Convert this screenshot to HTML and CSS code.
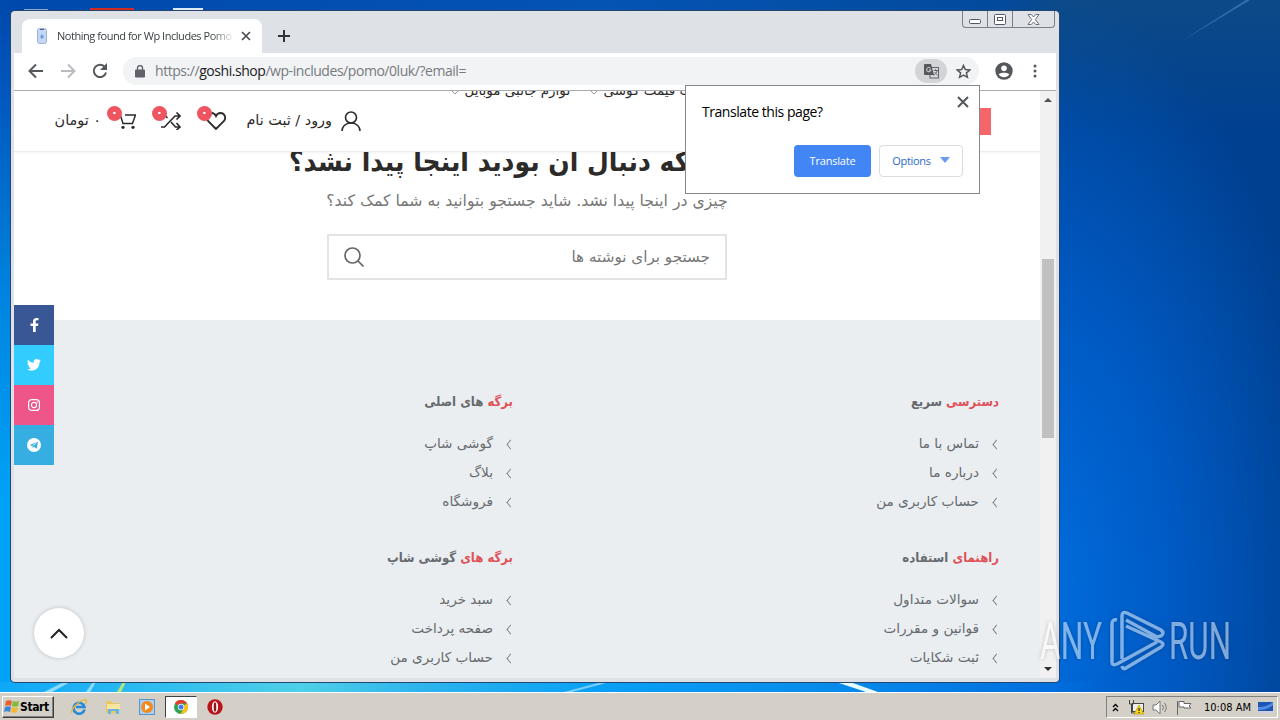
FILE: index.html
```html
<!DOCTYPE html>
<html lang="en">
<head>
    <meta charset="UTF-8">
    <title>Desktop</title>
    <link rel="stylesheet" href="styles.css">
</head>
<body>
<div class="desktop">
    <svg class="wallpaper" width="1280" height="692" viewBox="0 0 1280 692">
        <path d="M44 692L64 682H70L52 692zM86 692L93 682H96L90 692z" fill="#8fdcff"/>
        <path d="M117 692L123 682H126L121 692z" fill="#b4e87a"/>
        <path d="M564 692L602 682H610L572 692z" fill="#7ccfff"/>
        <path d="M836 682h14l28 10h-12z" fill="#e8fbff"/>
        <path d="M1180 42L1250 0h-4z" fill="#4c8acb" opacity=".6"/>
        <path d="M24 9h24v2H24z" fill="#8fa6cf"/>
        <path d="M90 8h44v3H90z" fill="#d32a22"/>
        <path d="M173 8h30v3h-30z" fill="#dfe8f5"/>
    </svg>

    <div class="window">
        <div class="tabstrip">
            <div class="tab">
                <svg width="12" height="16" viewBox="0 0 12 16"><rect x="1.5" y=".5" width="9" height="15" rx="2" fill="#c3d7f5" stroke="#a3b2d3"/><path d="M4 1h4v1H4z" fill="#51649a"/><path d="M4 9l2-3 2 3-2 2z" fill="#6f9be0"/></svg>
                <span class="tab-title">Nothing found for Wp Includes Pomo</span>
                <svg width="10" height="10" viewBox="0 0 10 10" stroke="#4a4d51" stroke-width="1.7"><path d="M1 1l8 8M9 1L1 9"/></svg>
            </div>
            <svg class="new-tab" width="12" height="12" viewBox="0 0 12 12" stroke="#303438" stroke-width="2"><path d="M6 0v12M0 6h12"/></svg>
            <div class="win-buttons">
                <span class="minimize"><svg width="12" height="5" viewBox="0 0 12 5"><rect x=".5" y=".5" width="11" height="4" rx="1" fill="#fff" stroke="#535666"/></svg></span>
                <span><svg width="12" height="11" viewBox="0 0 12 11" fill="#fff" stroke="#535666"><rect x=".5" y=".5" width="11" height="10" rx="1"/><rect x="3.5" y="3.5" width="5" height="3"/></svg></span>
                <span class="wide"><svg width="13" height="11" viewBox="0 0 13 11" fill="#fff" stroke="#6c6f7c"><path d="M1 .5h3.2L6.500 3 8.800.5H12L8.300 5.500 12 10.500H8.800L6.500 8l-2.300 2.500H1l3.700-5z"/></svg></span>
            </div>
        </div>

        <div class="toolbar">
            <svg width="16" height="16" viewBox="0 0 16 16" fill="none" stroke="#54575b" stroke-width="2"><path d="M15 8H2M8 1.500L1.500 8 8 14.500"/></svg>
            <svg width="16" height="16" viewBox="0 0 16 16" fill="none" stroke="#b9bbbe" stroke-width="2"><path d="M1 8h13M8 1.500L14.500 8 8 14.500"/></svg>
            <svg width="16" height="16" viewBox="0 0 16 16" fill="none" stroke="#54575b" stroke-width="2"><path d="M13 4.200A6.200 6.200 0 1 0 14 9.500"/><path d="M15 0v7H8z" fill="#54575b" stroke="none"/></svg>
            <div class="omnibox">
                <svg width="10" height="13" viewBox="0 0 10 13"><rect y="4.500" width="10" height="8" rx="1" fill="#5f6368"/><path d="M2.500 5V3a2.500 2.500 0 0 1 5 0v2" fill="none" stroke="#5f6368" stroke-width="1.400"/></svg>
                <span class="url">https://<b>goshi.shop</b>/wp-includes/pomo/0luk/?email=</span>
                <span class="translate-icon"><svg width="15" height="15" viewBox="0 0 15 15"><rect x="6" y="3.500" width="8.500" height="10.500" fill="#d8dadc" stroke="#5f6368"/><path d="M1 0h6l3 11H1a1 1 0 0 1-1-1V1a1 1 0 0 1 1-1z" fill="#54575b"/><path d="M6.500 4.200A2.200 2.200 0 1 0 7 6H5" fill="none" stroke="#e4e5e7"/><path d="M9.500 6.500H14M11.700 5v1.500M13 6.500c0 2-2 4-3.500 5M10.500 8l3 3.500" fill="none" stroke="#5f6368" stroke-width=".9"/></svg></span>
                <svg width="15" height="15" viewBox="0 0 15 15" fill="none" stroke="#54575b" stroke-width="1.500"><path d="M7.500 1.500l1.800 4.100 4.500.4-3.400 2.900 1 4.400-3.900-2.300-3.900 2.300 1-4.400L1.200 6l4.500-.4z"/></svg>
            </div>
            <svg width="18" height="18" viewBox="0 0 18 18"><circle cx="9" cy="9" r="8.700" fill="#54575b"/><circle cx="9" cy="6.300" r="2.800" fill="#fff"/><path d="M3.600 12.600c1.200-2.600 9.600-2.600 10.800 0-2.400 3.400-8.400 3.400-10.800 0z" fill="#fff"/></svg>
            <svg class="menu" width="4" height="14" viewBox="0 0 4 14" fill="#54575b"><circle cx="2" cy="2" r="1.500"/><circle cx="2" cy="7" r="1.500"/><circle cx="2" cy="12" r="1.500"/></svg>
        </div>

        <div class="viewport">
            <div class="page" dir="rtl" lang="fa">
                <div class="site-header">
                    <div class="nav">
                        <span>لیست قیمت گوشی</span>
                        <svg width="6" height="4" viewBox="0 0 6 4" fill="none" stroke="#999"><path d="M0 0l3 3 3-3"/></svg>
                        <span class="nav-second">لوازم جانبی موبایل</span>
                        <svg width="6" height="4" viewBox="0 0 6 4" fill="none" stroke="#999"><path d="M0 0l3 3 3-3"/></svg>
                    </div>
                    <div class="header-tools">
                        <span class="badge-sale"></span>
                        <svg width="20" height="20" viewBox="0 0 20 20" fill="none" stroke="#2d2a2a" stroke-width="1.600"><circle cx="10" cy="6.500" r="5.500"/><path d="M1 20c0-4 3-8 9-8s9 4 9 8"/></svg>
                        <span class="login">ورود / ثبت نام</span>
                        <span class="tool tool-heart"><svg width="20" height="18" viewBox="0 0 20 18" fill="none" stroke="#2d2a2a" stroke-width="1.800"><path d="M10 17L2 9C-.8 5 2 1 5.500 1 8 1 9.300 2.500 10 4c.7-1.500 2-3 4.500-3C18 1 20.800 5 18 9z"/></svg><i>۰</i></span>
                        <span class="tool tool-compare"><svg width="20" height="18" viewBox="0 0 20 18" fill="none" stroke="#2d2a2a" stroke-width="1.600"><path d="M0 15h3.500L14 4h5M0 3h3.500l3 3M10 10l4.500 5H19M15.500.5L19 4l-3.500 3.500M15.500 11l3.500 4-3.500 3"/></svg><i>۰</i></span>
                        <span class="tool tool-cart"><svg width="19" height="17" viewBox="0 0 19 17" fill="none" stroke="#2d2a2a" stroke-width="1.500"><path d="M0 2h3l3 9.500h9.500L18.500 3H8"/><circle cx="6" cy="15.300" r="1.600" fill="#2d2a2a" stroke="none"/><circle cx="16" cy="15.300" r="1.600" fill="#2d2a2a" stroke="none"/></svg><i>۰</i></span>
                        <span class="total">۰ تومان</span>
                    </div>
                </div>

                <div class="not-found">
                    <h1>چیزی که دنبال آن بودید اینجا پیدا نشد؟</h1>
                    <p>چیزی در اینجا پیدا نشد. شاید جستجو بتوانید به شما کمک کند؟</p>
                    <div class="search">
                        <span>جستجو برای نوشته ها</span>
                        <svg width="20" height="20" viewBox="0 0 20 20" fill="none" stroke="#666" stroke-width="1.700"><circle cx="8.500" cy="8.500" r="7.500"/><path d="M14 14l5.500 5.500"/></svg>
                    </div>
                </div>

                <div class="footer">
                    <div class="widget">
                        <h2><em>دسترسی</em> سریع</h2>
                        <ul>
                            <li>تماس با ما</li>
                            <li>درباره ما</li>
                            <li>حساب کاربری من</li>
                        </ul>
                    </div>
                    <div class="widget">
                        <h2><em>برگه</em> های اصلی</h2>
                        <ul>
                            <li>گوشی شاپ</li>
                            <li>بلاگ</li>
                            <li>فروشگاه</li>
                        </ul>
                    </div>
                    <div class="widget">
                        <h2><em>راهنمای</em> استفاده</h2>
                        <ul>
                            <li>سوالات متداول</li>
                            <li>قوانین و مقررات</li>
                            <li>ثبت شکایات</li>
                        </ul>
                    </div>
                    <div class="widget">
                        <h2><em>برگه های</em> گوشی شاپ</h2>
                        <ul>
                            <li>سبد خرید</li>
                            <li>صفحه پرداخت</li>
                            <li>حساب کاربری من</li>
                        </ul>
                    </div>
                </div>

                <div class="social">
                    <span class="facebook"><svg width="9" height="14" viewBox="0 0 9 14" fill="#fff"><path d="M3 14V8H.5V5.500H3V3.700C3 1.300 4.300 0 6.300 0H8.500v2.300H7c-1 0-1.300.5-1.300 1.300v1.900h2.700L8 8H5.700v6z"/></svg></span>
                    <span class="twitter"><svg width="14" height="12" viewBox="0 0 14 12" fill="#fff"><path d="M14 1.400l-1.400 1.500C12.700 8 9 11.500 4.500 11.500c-1.700 0-3.200-.5-4.500-1.300 1.500.1 3-.3 4.100-1.200-1.200 0-2.300-.8-2.600-2h1.200C1.400 6.700.4 5.500.5 4.200l1.200.3C.5 3.600.2 2 .9.700 2.400 2.500 4.500 3.600 6.800 3.700 6.300 1.700 7.700 0 9.700 0c.9 0 1.600.3 2.100.9l1.800-.7-1.200 1.500z"/></svg></span>
                    <span class="instagram"><svg width="12" height="12" viewBox="0 0 12 12" fill="none" stroke="#fff" stroke-width="1.200"><rect x=".6" y=".6" width="10.800" height="10.800" rx="3"/><circle cx="6" cy="6" r="2.600"/><path d="M8.800 3.100h1"/></svg></span>
                    <span class="telegram"><svg width="14" height="14" viewBox="0 0 14 14"><circle cx="7" cy="7" r="7" fill="#fff"/><path d="M2.500 7l8.500-3.300-1.400 7L7 8.800l-1.300 1.300-.4-2.200z" fill="#37aee2"/><path d="M5.400 8l4-3" stroke="#fff" stroke-width=".8"/></svg></span>
                </div>
                <div class="to-top"><svg width="18" height="11" viewBox="0 0 18 11" fill="none" stroke="#222" stroke-width="2"><path d="M1 10l8-8 8 8"/></svg></div>
            </div>
            <div class="scrollbar">
                <svg width="8" height="4" viewBox="0 0 8 4" fill="#505050"><path d="M0 4l4-4 4 4z"/></svg>
                <div class="thumb"></div>
                <svg width="8" height="4" viewBox="0 0 8 4" fill="#303030"><path d="M0 0l4 4 4-4z"/></svg>
            </div>
        </div>

        <div class="bubble">
            <div class="bubble-top">
                <span>Translate this page?</span>
                <svg width="12" height="12" viewBox="0 0 12 12" stroke="#54575b" stroke-width="2"><path d="M1 1l10 10M11 1L1 11"/></svg>
            </div>
            <div class="bubble-actions">
                <button class="primary">Translate</button>
                <button class="options">Options <svg width="10" height="6" viewBox="0 0 10 6" fill="#6b9bec"><path d="M0 0h10L5 6z"/></svg></button>
            </div>
        </div>
    </div>

    <svg class="watermark" width="196" height="66" viewBox="0 0 196 66">
        <g fill="#fff" font-family="Roboto" font-size="52">
            <text x="2" y="51" textLength="62" lengthAdjust="spacingAndGlyphs">ANY</text>
            <text x="131" y="51" textLength="62" lengthAdjust="spacingAndGlyphs">RUN</text>
        </g>
        <path d="M79 12q-5-1-5 4v38q0 4 5 2l40-22M84 51V8q0-5 5-3l34 17q4 3 0 6l-4 1L88 12M88 18l35 16q4 2 0 5L88 60q-3 2-4-2" fill="none" stroke="#fff" stroke-width="3.500"/>
    </svg>

    <div class="taskbar">
        <div class="start">
            <svg width="16" height="16" viewBox="0 0 16 16"><path d="M2 2c2-1 4-1 6 0L7 7c-2-1-4-1-6 0z" fill="#e8612c"/><path d="M9 2c2 1 4 1 6 0l-1 5c-2 1-4 1-6 0z" fill="#7db93b"/><path d="M1 8c2-1 4-1 6 0l-1 5c-2-1-4-1-6 0z" fill="#3d87d6"/><path d="M8 8c2 1 4 1 6 0l-1 5c-2 1-4 1-6 0z" fill="#f5b92c"/></svg>
            Start
        </div>
        <div class="quick">
            <span><svg width="16" height="16" viewBox="0 0 16 16" fill="none"><path d="M13.500 10.500A5.500 5.500 0 1 1 13.500 8H5" stroke="#2589dc" stroke-width="2.600"/><path d="M1 14C-1 11 9 0 15 1c1 1 0 3-1 4" stroke="#e7b832" stroke-width="1.300"/></svg></span>
            <span><svg width="16" height="16" viewBox="0 0 16 16"><path d="M1 2h5l1 2h7v10H1z" fill="#e8c75c"/><path d="M2 5h13v5H2z" fill="#f8e6a0"/><path d="M3 15v-5h11v5h-3v-3H6v3z" fill="#65b4e4"/></svg></span>
            <span><svg width="16" height="16" viewBox="0 0 16 16"><rect x=".5" y=".5" width="15" height="15" fill="#a9d0f0" stroke="#5b94ca"/><circle cx="8" cy="8" r="6" fill="#f58a1c"/><path d="M6 4.500l5 3.500-5 3.500z" fill="#fff"/></svg></span>
            <span class="active"><svg width="14" height="14" viewBox="0 0 14 14"><circle cx="7" cy="7" r="7" fill="#31a350"/><path d="M7 7L1 3.400A7 7 0 0 1 13.100 3.500H7z" fill="#e33b2e"/><path d="M7 7l6.100-3.500A7 7 0 0 1 6.500 14L10 8z" fill="#fbc116"/><circle cx="7" cy="7" r="3.200" fill="#fff"/><circle cx="7" cy="7" r="2.500" fill="#3f7fe8"/></svg></span>
            <span><svg width="16" height="16" viewBox="0 0 16 16"><circle cx="8" cy="8" r="7.700" fill="#b8141a"/><ellipse cx="8" cy="8" rx="3.100" ry="5.800" fill="#fff"/><ellipse cx="8" cy="8" rx="1.300" ry="4.800" fill="#98131a"/></svg></span>
        </div>
        <div class="tray">
            <svg width="7" height="9" viewBox="0 0 7 9" fill="none" stroke="#000" stroke-width="1.300"><path d="M1 4l2.500-2.500L6 4M1 8l2.500-2.500L6 8"/></svg>
            <svg class="network" width="17" height="16" viewBox="0 0 17 16"><rect x="4.500" y="4.500" width="11" height="8" fill="#eee" stroke="#444"/><path d="M1.500 1v4h4V1M3.500 5v9h4" fill="none" stroke="#444"/><path d="M11 6l5 9H6z" fill="#f7d417" stroke="#b49500" stroke-width=".6"/><path d="M10.500 9h1v3h-1zM10.500 13h1v1h-1z"/></svg>
            <svg width="17" height="15" viewBox="0 0 17 15" fill="none" stroke="#777"><path d="M1 5h3l4-4v13l-4-4H1z" fill="#fff"/><path d="M10.500 5q2 2.500 0 5M12.500 3q3.500 4.500 0 9" /></svg>
            <svg width="17" height="15" viewBox="0 0 17 15" fill="#fff" stroke="#666"><path d="M1.500 15V1M3 1.500h5v2h7l-2 2.500 2 2H8V7H3z"/></svg>
            <span>10:08 AM</span>
            <svg width="16" height="13" viewBox="0 0 16 13"><path d="M0 1h15v9H0z" fill="#1e55b5"/><path d="M0 6c6 0 10-1 15-5v3c-5 4-9 5-15 5z" fill="#4e8ee5"/><path d="M0 10h15v2H0z" fill="#c9d3df"/></svg>
        </div>
    </div>
</div>
</body>
</html>
```
FILE: styles.css
```css
* { box-sizing: border-box; }
body { margin: 0; font-family: "Open Sans", sans-serif; }
svg { display: block; flex: none; }

.desktop {
    position: relative;
    width: 1280px;
    height: 720px;
    overflow: hidden;
    padding-top: 692px;
    background:
        linear-gradient(to right, #0ea8f8, #4fd0e8 300px, #2db4ec 420px, #08a0f5 600px, #0789ea 850px, #0070e0 1040px, rgba(0,90,200,0) 1100px) 0 682px / 1280px 10px no-repeat,
        linear-gradient(to bottom, #0048ac, #0059bf 100px, #0085e0 300px, #00a2f6 500px) 0 0 / 12px 692px no-repeat,
        linear-gradient(to right, #0048ac, #0454b4 600px, #034a9c 1000px, rgba(3,74,156,0) 1060px) 0 0 / 1280px 12px no-repeat,
        linear-gradient(to bottom, rgba(20,80,130,.6), rgba(0,64,140,0) 130px),
        radial-gradient(ellipse 300px 620px at 1030px 600px, #006fe0, #0059c2 50%, #004090 100%);
}
.wallpaper { position: absolute; top: 0; left: 0; }

/* browser window */
.window {
    position: absolute;
    left: 11px;
    top: 11px;
    width: 1048px;
    height: 671px;
    padding: 0 3px 3px;
    background: #dee1e6;
    border-radius: 4px;
    box-shadow: 0 0 0 1px #24466f;
}
.tabstrip { display: flex; height: 42px; padding-left: 8px; }
.tab {
    display: flex;
    align-items: center;
    width: 240px;
    height: 34px;
    margin-top: 8px;
    padding: 0 11px 0 14px;
    background: #fff;
    border-radius: 8px 8px 0 0;
}
.tab-title {
    width: 178px;
    margin: -2px 6px 0 9px;
    white-space: nowrap;
    font-size: 11px;
    letter-spacing: -0.46px;
    color: #3c4043;
    -webkit-mask: linear-gradient(to left, transparent, #000 24px);
}
.new-tab { margin: 19px 0 0 16px; }
.win-buttons {
    display: flex;
    height: 17px;
    margin: 0 1px 0 auto;
    border: 1px solid #7b7e88;
    border-top: 0;
    border-radius: 0 0 4px 4px;
}
.win-buttons span { display: flex; align-items: center; justify-content: center; width: 25px; }
.win-buttons span + span { border-left: 1px solid #7b7e88; }
.win-buttons .wide { width: 42px; }
.win-buttons .minimize { width: 24px; padding-top: 4px; }

.toolbar {
    display: flex;
    align-items: center;
    gap: 16px;
    height: 38px;
    padding: 0 19px 1px 14px;
    background: #fff;
    border-bottom: 1px solid #a9abae;
}
.omnibox {
    display: flex;
    align-items: center;
    width: 857px;
    height: 28px;
    margin-left: -1px;
    padding: 0 8px 0 12px;
    background: #f1f3f4;
    border-radius: 14px;
}
.url { margin: -2px auto 0 10px; font-size: 14px; letter-spacing: -0.45px; color: #777b80; }
.url b { font-weight: normal; color: #202124; }
.translate-icon {
    display: flex;
    align-items: center;
    justify-content: center;
    width: 32px;
    height: 24px;
    margin-right: 9px;
    background: #d2d4d6;
    border-radius: 12px;
}
.menu { margin-left: 4px; }

/* page */
.viewport { display: flex; height: 587px; background: #fff; }
.page {
    position: relative;
    width: 1026px;
    overflow: hidden;
    font-family: "DejaVu Sans", sans-serif;
    color: #2d2a2a;
}
.scrollbar {
    display: flex;
    flex-direction: column;
    align-items: center;
    width: 16px;
    padding: 7px 0;
    background: #f1f1f1;
}
.thumb { width: 12px; height: 179px; margin: 157px 0 auto; background: #c1c1c1; }

.site-header {
    position: relative;
    height: 61px;
    background: #fff;
    border-bottom: 1px solid #ececec;
    box-shadow: 0 1px 2px rgba(0,0,0,.05);
}
.nav {
    display: flex;
    height: 9px;
    padding-right: 327px;
    overflow: hidden;
    font-size: 13.5px;
    line-height: 16px;
    white-space: nowrap;
}
.nav span { margin-top: -9px; }
.nav svg { margin: 0 6px; }
.nav .nav-second { margin-right: 15px; }
.header-tools { display: flex; align-items: center; height: 42px; padding: 0 49px 0 0; font-size: 14.4px; }
.badge-sale { width: 40px; height: 27px; background: #f5666b; }
.header-tools .login { width: 86px; margin: -3px 9px 0 1px; white-space: nowrap; }
.badge-sale + svg { margin-right: 590px; }
.tool { position: relative; width: 20px; height: 18px; }
.tool-heart { margin-right: 19px; }
.tool-compare { margin-right: 25px; }
.tool-cart { margin-right: 25px; }
.tool i {
    position: absolute;
    top: -6px;
    left: -9px;
    width: 15px;
    height: 15px;
    font: bold 12px/13px "DejaVu Sans", sans-serif;
    text-align: center;
    color: #fff;
    background: #ee5560;
    border-radius: 50%;
}
.total { margin: -3px 15px 0 0; white-space: nowrap; }

.not-found { display: flow-root; height: 168px; text-align: center; }
.not-found h1 { margin: -11px 0 0; font: bold 27.9px/42px "DejaVu Sans Condensed", "DejaVu Sans", sans-serif; white-space: nowrap; }
.not-found p { margin: 6px 0 0; font-size: 15.7px; line-height: 24px; color: #777; }
.search {
    display: flex;
    align-items: center;
    justify-content: space-between;
    width: 400px;
    height: 46px;
    margin: 21px auto 0;
    padding: 0 15px;
    border: 2px solid #e3e3e3;
    font-size: 15.2px;
    line-height: 20px;
    color: #777;
}

.footer {
    display: grid;
    grid-template-columns: 486px 486px;
    grid-auto-rows: 156px;
    height: 358px;
    padding: 69px 41px 0 0;
    background: #eaeef1;
    color: #666a6e;
}
.widget h2 { margin: 0 0 13px; font: bold 13px/26px "DejaVu Sans Condensed", "DejaVu Sans", sans-serif; }
.widget em { font-style: normal; color: #e0525a; }
.widget ul { margin: 0; padding: 0; list-style: none; }
.widget li { display: flex; align-items: center; height: 29px; font-size: 13.6px; }
.widget li::before {
    content: "";
    width: 6px;
    height: 6px;
    margin: 3px -1px 0 14px;
    border: solid #777;
    border-width: 0 0 1px 1px;
    transform: scaleX(.8) rotate(45deg);
}

.social { position: absolute; left: 0; top: 214px; }
.social span { display: flex; align-items: center; justify-content: center; width: 40px; height: 40px; }
.facebook { background: #3a5795; }
.twitter { background: #33ccff; }
.instagram { background: #ee5588; }
.telegram { background: #37aee2; }
.to-top {
    position: absolute;
    left: 20px;
    top: 517px;
    display: flex;
    align-items: center;
    justify-content: center;
    width: 50px;
    height: 50px;
    background: #fff;
    border-radius: 50%;
    box-shadow: 0 0 4px rgba(0,0,0,.2);
}

/* translate popup */
.bubble {
    position: absolute;
    left: 674px;
    top: 74px;
    width: 295px;
    height: 109px;
    padding: 10px 10px 0 16px;
    background: #fff;
    border: 1px solid #85878a;
}
.bubble-top { display: flex; justify-content: space-between; height: 49px; font-size: 14px; line-height: 31px; letter-spacing: -0.45px; }
.bubble-actions { display: flex; justify-content: flex-end; gap: 8px; padding-right: 6px; }
.bubble button { height: 32px; padding: 0 0 2px; border-radius: 4px; font: 11px "Open Sans", sans-serif; letter-spacing: -0.3px; }
.bubble .primary { width: 77px; color: #fff; background: #4285f4; border: 0; letter-spacing: -0.2px; }
.options {
    display: flex;
    align-items: center;
    justify-content: center;
    gap: 9px;
    width: 84px;
    color: #2c6bcb;
    background: #fff;
    border: 1px solid #dadce0;
}

.watermark { position: absolute; left: 1038px; top: 608px; opacity: .5; filter: drop-shadow(0 0 2px rgba(0,0,0,.4)); }

/* taskbar */
.taskbar {
    display: flex;
    align-items: center;
    height: 28px;
    padding: 1px 2px 0;
    background: #d4d0c8;
    border-top: 1px solid #fff;
    font-family: "DejaVu Sans Condensed", "DejaVu Sans", sans-serif;
    font-size: 11px;
}
.start {
    display: flex;
    align-items: center;
    width: 52px;
    height: 22px;
    padding-left: 1px;
    font-size: 12px;
    font-weight: bold;
    letter-spacing: -0.4px;
    border: 1px solid;
    border-color: #fff #404040 #404040 #fff;
    box-shadow: inset -1px -1px #808080;
}
.quick { display: flex; align-items: center; margin-left: 9px; gap: 2px; }
.quick span { display: flex; align-items: center; justify-content: center; width: 32px; height: 22px; }
.quick .active { background: #fff; border: 1px solid; border-color: #404040 #fff #fff #404040; }
.tray {
    display: flex;
    align-items: center;
    width: 172px;
    height: 22px;
    margin-left: auto;
    padding-left: 5px;
    border: 1px solid;
    border-color: #808080 #fff #fff #808080;
    gap: 7px;
}
.tray .network { margin-left: 2px; }
.tray span { margin-left: 4px; white-space: nowrap; }
```
